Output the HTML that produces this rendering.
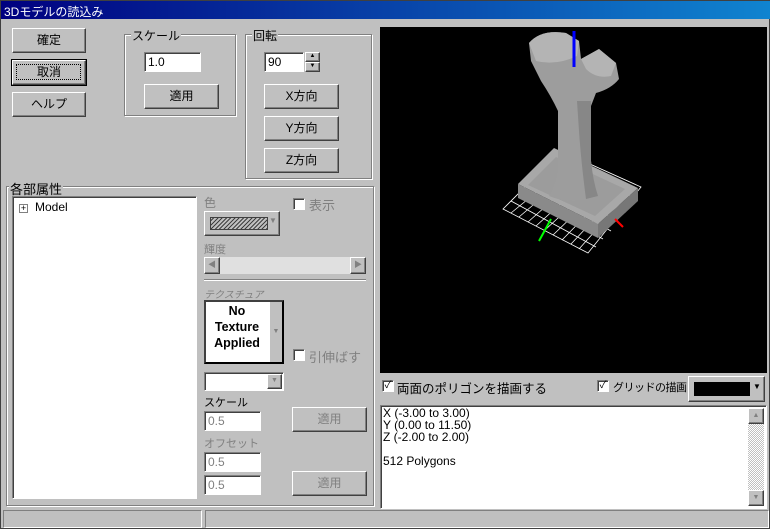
<!DOCTYPE html>
<html><head><meta charset="utf-8"><style>
*{box-sizing:border-box;margin:0;padding:0}
body{width:770px;height:529px;background:#c0c0c0;font-family:"Liberation Sans","Noto Sans CJK JP",sans-serif;font-size:12px;position:relative;overflow:hidden;border:1px solid #404040;}
.a{position:absolute}
.btn{position:absolute;background:#c0c0c0;border:1px solid;border-color:#fff #404040 #404040 #fff;box-shadow:inset -1px -1px 0 #808080;text-align:center;font-size:12px;color:#000}
.grp{position:absolute;border:1px solid #808080;box-shadow:1px 1px 0 #fff, inset 1px 1px 0 #fff}
.grp span{position:absolute;top:-8px;left:6px;background:#c0c0c0;padding:0 1px;font-size:12px}
.edit{position:absolute;background:#fff;border:1px solid;border-color:#808080 #fff #fff #808080;box-shadow:inset 1px 1px 0 #404040;font-size:12px;padding:2px 0 0 3px}
.dis{color:#808080}
.edit.d{background:#fff;color:#808080}
.chk{position:absolute;width:12px;height:12px;background:#fff;border:1px solid;border-color:#808080 #fff #fff #808080;box-shadow:inset 1px 1px 0 #404040;font-size:10px;line-height:10px;text-align:center}
</style></head><body>
<div class="a" style="left:0;top:0;width:770px;height:18px;background:linear-gradient(90deg,#000080,#1084d0);color:#fff;font-size:12px;padding:2px 0 0 3px">3Dモデルの読込み</div>

<div class="btn" style="left:11px;top:27px;width:74px;height:25px;line-height:22px">確定</div>
<div class="btn" style="left:11px;top:59px;width:74px;height:25px;line-height:22px;outline:1px solid #000">取消<div class="a" style="left:3px;top:3px;right:4px;bottom:4px;border:1px dotted #000"></div></div>
<div class="btn" style="left:11px;top:91px;width:74px;height:25px;line-height:22px">ヘルプ</div>

<div class="grp" style="left:123px;top:33px;width:112px;height:82px"><span>スケール</span></div>
<div class="edit" style="left:143px;top:51px;width:57px;height:20px">1.0</div>
<div class="btn" style="left:143px;top:83px;width:75px;height:25px;line-height:22px">適用</div>

<div class="grp" style="left:244px;top:33px;width:127px;height:145px"><span>回転</span></div>
<div class="edit" style="left:263px;top:51px;width:40px;height:20px">90</div>
<div class="btn" style="left:304px;top:51px;width:15px;height:10px;font-size:6px;line-height:7px">▲</div>
<div class="btn" style="left:304px;top:61px;width:15px;height:10px;font-size:6px;line-height:7px">▼</div>
<div class="btn" style="left:263px;top:83px;width:75px;height:25px;line-height:22px">X方向</div>
<div class="btn" style="left:263px;top:115px;width:75px;height:25px;line-height:22px">Y方向</div>
<div class="btn" style="left:263px;top:147px;width:75px;height:25px;line-height:22px">Z方向</div>

<div class="grp" style="left:5px;top:185px;width:368px;height:320px"><span style="left:2px;font-size:13px">各部属性</span></div>
<div class="edit" style="left:11px;top:195px;width:185px;height:303px;padding:0">
 <div class="a" style="left:6px;top:7px;width:9px;height:9px;border:1px solid #808080;font-size:9px;line-height:7px;text-align:center">+</div>
 <div class="a" style="left:22px;top:3px;font-size:12px">Model</div>
</div>

<div class="a dis" style="left:203px;top:193px">色</div>
<div class="btn" style="left:203px;top:210px;width:76px;height:25px"><div class="a" style="left:5px;top:5px;width:58px;height:13px;border:1px solid #404040;background:repeating-linear-gradient(-45deg,#404040 0 1px,#c0c0c0 1px 3px)"></div><div class="a dis" style="left:64px;top:4px;font-size:8px">▼</div></div>
<div class="chk" style="left:292px;top:197px"></div><div class="a dis" style="left:308px;top:194px;font-size:13px">表示</div>
<div class="a dis" style="left:203px;top:240px;font-size:11px">輝度</div>
<div class="a" style="left:203px;top:256px;width:162px;height:17px;background:#e0e0e0"></div>
<div class="btn" style="left:203px;top:256px;width:16px;height:17px;font-size:8px;line-height:14px;color:#808080">◀</div>
<div class="btn" style="left:349px;top:256px;width:16px;height:17px;font-size:8px;line-height:14px;color:#808080">▶</div>
<div class="a" style="left:203px;top:278px;width:162px;height:2px;border-top:1px solid #808080;border-bottom:1px solid #fff"></div>
<div class="a dis" style="left:203px;top:285px;font-size:10px;font-style:italic">テクスチュア</div>
<div class="a" style="left:203px;top:299px;width:80px;height:64px;background:#fff;border:2px solid #000;border-color:#404040 #000 #000 #404040"></div>
<div class="a" style="left:205px;top:302px;width:62px;text-align:center;font-weight:bold;font-size:12.5px;line-height:16px">No<br>Texture<br>Applied</div>
<div class="a" style="left:268px;top:301px;width:13px;height:60px;background:#c0c0c0;border-left:1px solid #fff;font-size:7px;color:#808080;text-align:center;padding-top:26px">▼</div>
<div class="chk" style="left:292px;top:348px"></div><div class="a dis" style="left:308px;top:346px;font-size:13px">引伸ばす</div>
<div class="edit" style="left:203px;top:371px;width:80px;height:19px;padding:0"><div class="btn" style="left:62px;top:1px;width:15px;height:15px;font-size:7px;line-height:12px;color:#808080">▼</div></div>
<div class="a" style="left:203px;top:393px;font-size:11px">スケール</div>
<div class="edit d" style="left:203px;top:410px;width:57px;height:20px">0.5</div>
<div class="btn dis" style="left:291px;top:406px;width:75px;height:25px;line-height:22px">適用</div>
<div class="a dis" style="left:203px;top:434px;font-size:11px">オフセット</div>
<div class="edit d" style="left:203px;top:451px;width:57px;height:20px">0.5</div>
<div class="edit d" style="left:203px;top:474px;width:57px;height:20px">0.5</div>
<div class="btn dis" style="left:291px;top:470px;width:75px;height:25px;line-height:22px">適用</div>

<svg class="a" style="left:379px;top:26px" width="387" height="346" viewBox="379 26 387 346">
<rect x="379" y="26" width="387" height="346" fill="#000"/>
<g stroke="#fff" stroke-width="0.8" fill="none">
<path d="M502 208 L587 252 L640 186 L560 150 Z"/>
<path d="M510 212 L565 167 M518 216 L572 170 M527 221 L580 174 M535 225 L588 177 M544 229 L596 181 M552 234 L604 184 M561 239 L612 187 M570 243 L620 190 M578 248 L630 190"/>
<path d="M510 200 L595 246 M518 191 L602 238 M526 183 L610 230 M534 175 L617 220 M542 166 L625 211 M550 158 L632 196"/>
</g>
<path d="M517 183 L553 147 L637 187 L597 223 Z" fill="#a8a8a8"/>
<path d="M517 183 L597 223 L597 237 L517 197Z" fill="#8a8a8a"/>
<path d="M597 223 L637 187 L637 200 L597 237Z" fill="#777"/>
<path d="M527 184 L555 156 L624 188 L594 215 Z" fill="#9c9c9c"/>
<path d="M548 195 Q556 180 557 165 L557 110 Q550 95 540 80 L530 60 L528 42 Q540 28 565 32 L578 40 L580 58 L598 48 L615 62 L618 78 Q610 88 595 92 L590 105 L590 160 Q592 180 597 195 Q572 205 548 195Z" fill="#9d9d9d"/>
<path d="M528 42 Q540 28 565 32 L578 40 L576 55 Q555 65 535 60Z" fill="#b4b4b4"/>
<path d="M580 58 L598 48 L615 62 L610 75 Q595 78 585 68Z" fill="#b4b4b4"/>
<path d="M576 100 L590 100 L590 160 Q592 180 597 195 L585 198 Q580 160 578 130Z" fill="#878787"/>
<path d="M573 30 L573 66" stroke="#00f" stroke-width="3"/>
<path d="M550 218 L538 240" stroke="#0f0" stroke-width="2"/>
<path d="M614 218 L622 226" stroke="#f00" stroke-width="2"/>
</svg>

<div class="chk" style="left:381px;top:379px">✓</div>
<div class="a" style="left:396px;top:377px;font-size:12.5px">両面のポリゴンを描画する</div>
<div class="chk" style="left:596px;top:379px">✓</div>
<div class="a" style="left:612px;top:378px;font-size:11px;letter-spacing:-0.5px">グリッドの描画</div>
<div class="btn" style="left:687px;top:375px;width:77px;height:26px"><div class="a" style="left:5px;top:5px;width:56px;height:14px;background:#000"></div><div class="a" style="left:64px;top:5px;font-size:8px">▼</div></div>

<div class="edit" style="left:379px;top:404px;width:387px;height:104px;padding:1px 0 0 2px;line-height:12px;font-size:12px">X (-3.00 to 3.00)<br>Y (0.00 to 11.50)<br>Z (-2.00 to 2.00)<br><br>512 Polygons
 <div class="a" style="right:2px;top:2px;width:16px;bottom:2px;background:repeating-conic-gradient(#c0c0c0 0 25%,#fff 0 50%) 0 0/2px 2px"></div>
 <div class="btn" style="right:2px;top:2px;width:16px;height:16px;font-size:7px;line-height:13px;color:#808080">▲</div>
 <div class="btn" style="right:2px;bottom:2px;width:16px;height:16px;font-size:7px;line-height:13px;color:#808080">▼</div>
</div>

<div class="a" style="left:2px;top:509px;width:199px;height:18px;border:1px solid;border-color:#808080 #fff #fff #808080"></div>
<div class="a" style="left:204px;top:509px;width:564px;height:18px;border:1px solid;border-color:#808080 #fff #fff #808080"></div>
</body></html>
